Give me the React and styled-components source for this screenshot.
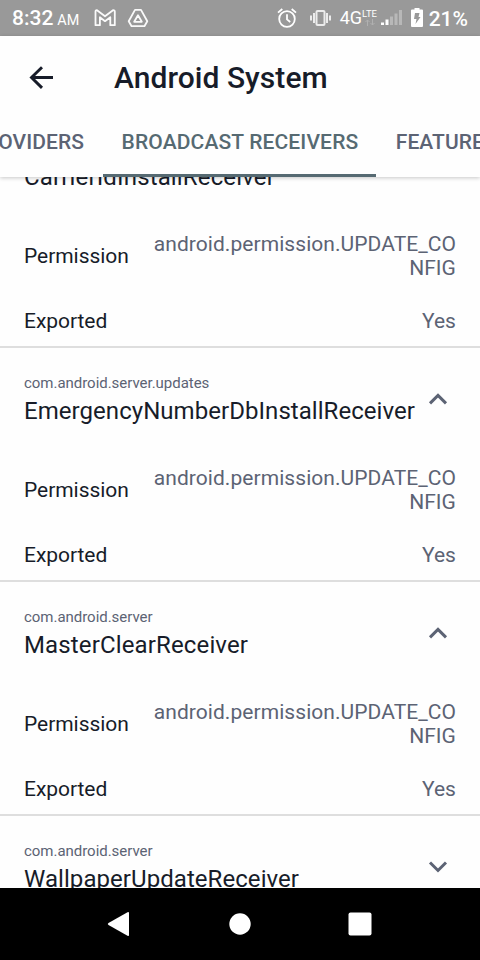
import React from "react";
import styled, { createGlobalStyle } from "styled-components";

const GlobalStyle = createGlobalStyle`
  * { box-sizing: border-box; }
  body { margin: 0; overflow: hidden; background: #fff; font-family: Roboto, sans-serif; }
`;

const Screen = styled.div`
  width: 480px;
  height: 960px;
  display: flex;
  flex-direction: column;
  overflow: hidden;
  background: #fefefe;
  color: #171c29;
`;

const StatusBar = styled.header`
  flex: none;
  height: 36px;
  display: flex;
  align-items: center;
  justify-content: space-between;
  padding: 0 12px;
  background: #999;
  color: #fff;
`;

const StatusGroup = styled.div`
  display: flex;
  align-items: center;
  height: 36px;
`;

const Clock = styled.div`
  display: flex;
  align-items: baseline;
  width: 82px;
  padding-top: 2px;
  font-weight: 500;
  font-size: 21px;
  line-height: 25px;
`;

const Meridiem = styled.span`
  margin-left: 4px;
  font-size: 14.4px;
  font-weight: 400;
`;

const Icon = styled.svg`
  flex: none;
  display: block;
  overflow: visible;
  margin-left: ${(p) => p.$gap || 0}px;
`;

const Network = styled.div`
  display: flex;
  margin-left: 9px;
  width: 41px;
  font-size: 18px;
  line-height: 36px;
`;

const NetworkDetail = styled.div`
  display: flex;
  flex-direction: column;
  padding-top: 9px;
  font-size: 9.5px;
  line-height: 10px;
`;

const Percent = styled.div`
  margin-left: 6px;
  padding-top: 2px;
  font-size: 21px;
  line-height: 25px;
  font-weight: 500;
`;

const AppBar = styled.div`
  position: relative;
  z-index: 1;
  flex: none;
  height: 141px;
  background: #fefefe;
  box-shadow: 0 1px 4px rgba(0, 0, 0, 0.22);
`;

const TitleRow = styled.div`
  height: 84px;
  display: flex;
  align-items: center;
  padding-left: 29px;
`;

const Title = styled.h1`
  margin: 0 0 0 61px;
  font-size: 30px;
  line-height: 36px;
  font-weight: 500;
  letter-spacing: 0.05px;
`;

const TabStrip = styled.nav`
  display: flex;
  gap: 1.4px;
  margin-left: -46.5px;
  height: 57px;
`;

const Tab = styled.div`
  flex: none;
  padding: 9px 18px 0;
  font-size: 21px;
  line-height: 26px;
  font-weight: 500;
  letter-spacing: ${(p) => (p.$active ? "0.14px" : "0.08px")};
  white-space: nowrap;
  color: ${(p) => (p.$active ? "#566a72" : "#5c6374")};
  border-bottom: 3px solid ${(p) => (p.$active ? "#566a72" : "transparent")};
`;

const Viewport = styled.main`
  flex: 1;
  min-height: 0;
  overflow: hidden;
`;

const List = styled.div`
  margin-top: -63px;
`;

const Item = styled.section`
  height: 234px;
  padding: 0 24px;
  border-bottom: 2px solid #dedede;
`;

const ItemHeader = styled.div`
  display: flex;
  justify-content: space-between;
  height: 118px;
  padding-top: 26px;
`;

const Package = styled.div`
  font-size: 15px;
  line-height: 18px;
  letter-spacing: -0.03px;
  color: #5c6374;
`;

const Name = styled.div`
  margin-top: 5px;
  font-size: 24px;
  line-height: 28px;
  letter-spacing: ${(p) => p.$tracking}px;
  white-space: nowrap;
`;

const Chevron = styled(Icon)`
  margin: 19px 9px 0 0;
`;

const Property = styled.div`
  display: flex;
  justify-content: space-between;
  align-items: center;
  margin-bottom: 29px;
  font-size: 21px;
  line-height: 24px;
`;

const Label = styled.span`
  letter-spacing: -0.05px;
`;

const Value = styled.span`
  width: 303px;
  text-align: right;
  word-break: break-all;
  color: #5c6374;
  letter-spacing: 0.06px;
`;

const NavBar = styled.footer`
  flex: none;
  height: 72px;
  display: flex;
  align-items: center;
  justify-content: center;
  gap: 96px;
  background: #000;
`;

const receivers = [
  { pkg: "com.android.server.updates", name: "CarrierIdInstallReceiver", tracking: 0.15, open: true },
  { pkg: "com.android.server.updates", name: "EmergencyNumberDbInstallReceiver", tracking: 0.05, open: true },
  { pkg: "com.android.server", name: "MasterClearReceiver", tracking: 0.14, open: true },
  { pkg: "com.android.server", name: "WallpaperUpdateReceiver", tracking: 0.06, open: false },
];

function Receiver({ pkg, name, tracking, open }) {
  return (
    <Item>
      <ItemHeader>
        <div>
          <Package>{pkg}</Package>
          <Name $tracking={tracking}>{name}</Name>
        </div>
        <Chevron width="18" height="12" viewBox="0 0 18 12" fill="none" stroke="#5c6374" strokeWidth="3">
          <path d={open ? "M1 10.4 9 2.4 17 10.4" : "M1 1.5 9 9.5 17 1.5"} />
        </Chevron>
      </ItemHeader>
      {open && (
        <>
          <Property>
            <Label>Permission</Label>
            <Value>android.permission.UPDATE_CONFIG</Value>
          </Property>
          <Property>
            <Label>Exported</Label>
            <Value>Yes</Value>
          </Property>
        </>
      )}
    </Item>
  );
}

export default function App() {
  return (
    <>
      <GlobalStyle />
      <Screen>
        <StatusBar>
          <StatusGroup>
            <Clock>
              8:32<Meridiem>AM</Meridiem>
            </Clock>
            <Icon width="22" height="18" viewBox="0 0 22 18" fill="none" stroke="#fafafa" strokeWidth="1.8" strokeLinejoin="round">
              <path d="M1.5 16.2V2.5Q1.5 1 3 1.2L11 7.3 19 1.2Q20.8 1 20.8 2.5V16.2H16.3V8.2L11 12.2 5.9 8.2V16.2Z" />
            </Icon>
            <Icon $gap={12} width="20" height="18" viewBox="0 0 20 18" fill="none" stroke="#fafafa" strokeWidth="1.8" strokeLinejoin="round">
              <path d="M7 .9h6L19.3 12.2 16.4 17.2H3.6L.7 12.2Z" />
              <path d="M10 6.2 13.8 12.8H6.2Z" />
            </Icon>
          </StatusGroup>
          <StatusGroup>
            <Icon width="20" height="20" viewBox="0 0 20 20" fill="none" stroke="#fff" strokeWidth="1.8">
              <circle cx="10" cy="11" r="7.8" />
              <path d="M1 4.6 5.3 1M19 4.6 14.7 1M10 6.2v5.2l3.2 2.6" />
            </Icon>
            <Icon $gap={13} width="21" height="16" viewBox="0 0 21 16" fill="none" stroke="#ececec" strokeWidth="2">
              <rect x="6.5" y="1" width="8" height="14" rx="1" />
              <path d="M4 3v10M17 3v10M1 5.5v5M20 5.5v5" />
            </Icon>
            <Network>
              4G
              <NetworkDetail>
                LTE
                <Icon $gap={3} width="10" height="7" viewBox="0 0 10 7" fill="none" stroke="#b0b0b0">
                  <path d="M2.5 7V1M.5 3l2-2 2 2M7.5 0v6M5.5 4l2 2 2-2" />
                </Icon>
              </NetworkDetail>
            </Network>
            <Icon width="21" height="16" viewBox="0 0 21 16">
              <path fill="#fff" d="M0 12.5h3V15H0zM4.5 9.5h3V15h-3z" />
              <path fill="#b8b8b8" d="M9 6.5h3V15H9zM13.5 3.5h3V15h-3zM18 0h3v15h-3z" />
            </Icon>
            <Icon $gap={9} width="12" height="20" viewBox="0 0 12 20">
              <path fill="#fff" d="M3.5 0h5v1.5H11q1 0 1 1V18q0 1-1 1H1q-1 0-1-1V2.500q0-1 1-1H3.500z" />
              <path fill="#999" d="M4 5h4.500L7.500 9H9.500L4.500 16 5.500 11H3z" />
            </Icon>
            <Percent>21%</Percent>
          </StatusGroup>
        </StatusBar>
        <AppBar>
          <TitleRow>
            <Icon width="24" height="24" viewBox="0 0 24 24" fill="none" stroke="#171c29" strokeWidth="2.9">
              <path d="M24 11.500H2.500M13 1.200 2.500 11.500 13 21.900" />
            </Icon>
            <Title>Android System</Title>
          </TitleRow>
          <TabStrip>
            <Tab>PROVIDERS</Tab>
            <Tab $active>BROADCAST RECEIVERS</Tab>
            <Tab>FEATURES</Tab>
          </TabStrip>
        </AppBar>
        <Viewport>
          <List>
            {receivers.map((r) => (
              <Receiver key={r.name} {...r} />
            ))}
          </List>
        </Viewport>
        <NavBar>
          <Icon width="24" height="26" viewBox="0 0 24 26" fill="#fff">
            <path d="M19.500 1.300Q21 .5 21 2V24Q21 25.500 19.500 24.700L.5 14Q-1 13 .5 12Z" />
          </Icon>
          <Icon width="24" height="24" viewBox="0 0 24 24" fill="#fff">
            <circle cx="12" cy="12" r="10.700" />
          </Icon>
          <Icon width="24" height="24" viewBox="0 0 24 24" fill="#fff">
            <rect x=".5" y=".5" width="23" height="23" rx="2" />
          </Icon>
        </NavBar>
      </Screen>
    </>
  );
}
